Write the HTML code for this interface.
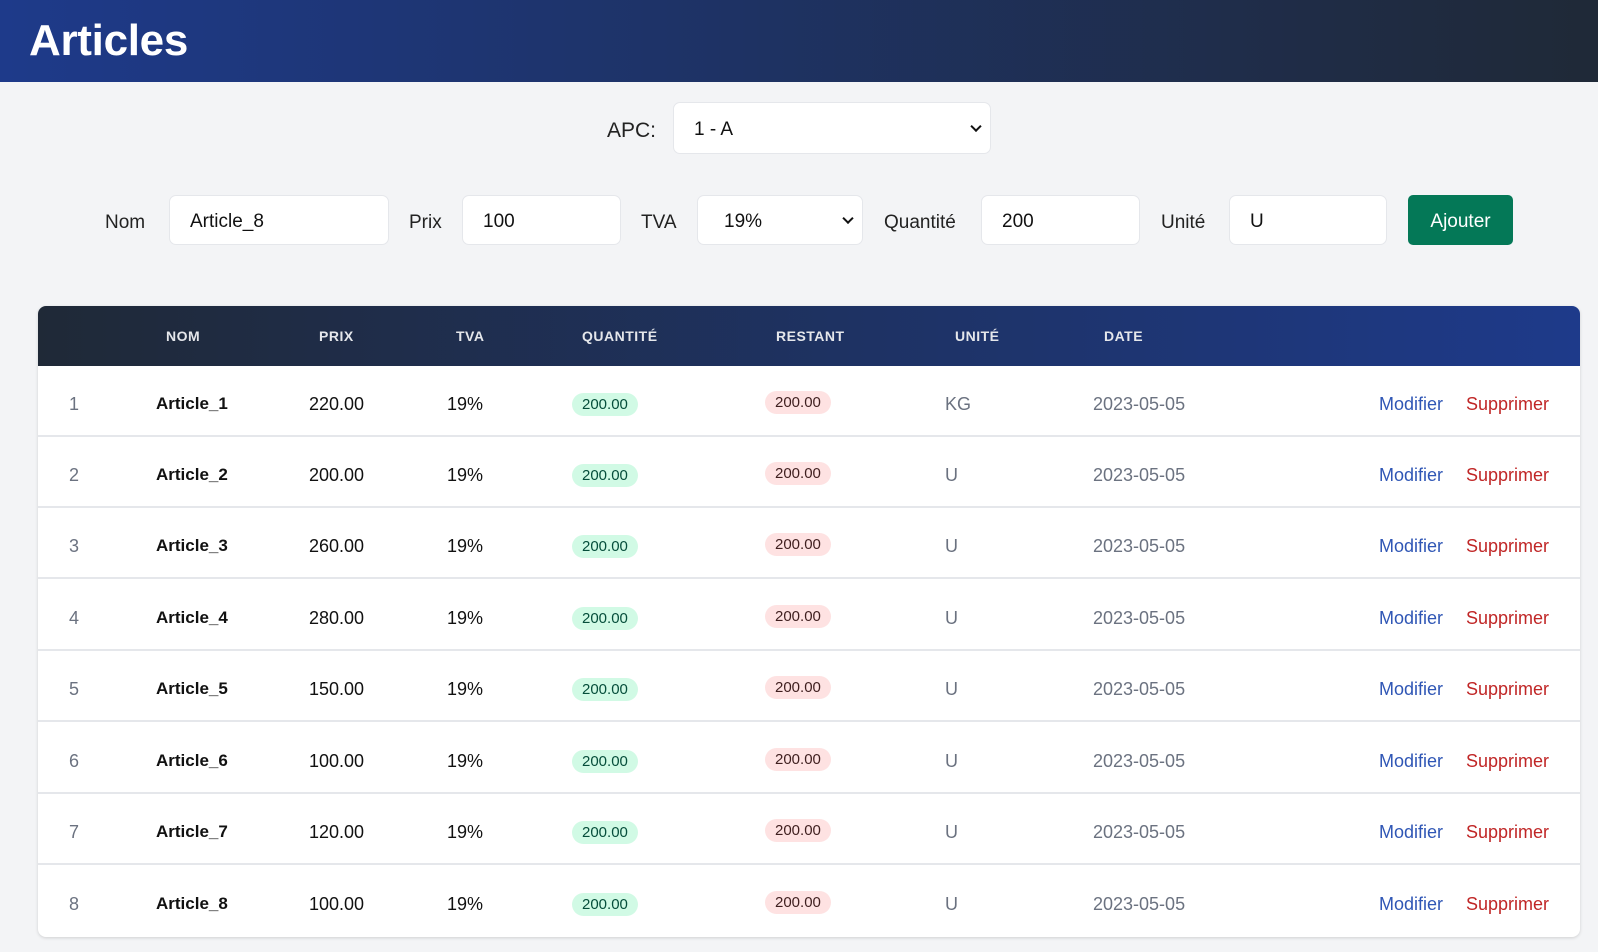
<!DOCTYPE html>
<html><head><meta charset="utf-8"><style>
*{box-sizing:border-box;margin:0;padding:0}
body{width:1598px;height:952px;background:#f3f4f6;font-family:"Liberation Sans",sans-serif;position:relative;overflow:hidden;color:#111}
.hdr{position:absolute;left:0;top:0;width:1598px;height:82px;background:linear-gradient(90deg,#1e3a8a,#1f2937)}
.hdr h1{position:absolute;left:29px;top:16px;color:#fff;font-size:44px;font-weight:bold;letter-spacing:-0.3px}
.a{position:absolute}
.lbl{font-size:19px;color:#222}
.in{position:absolute;background:#fff;border:1px solid #e5e7eb;border-radius:7px;font-size:19px;padding-left:20px;padding-top:4px;display:flex;align-items:center;color:#111}
.chev{position:absolute;right:10px;top:50%;width:8px;height:8px;border-right:2px solid #111;border-bottom:2px solid #111;transform:translateY(-70%) rotate(45deg)}
.btn{position:absolute;left:1408px;top:195px;width:105px;height:50px;background:#047857;border-radius:5px;color:#fff;font-size:19px;display:flex;align-items:center;justify-content:center;padding-top:3px}
.tbl{position:absolute;left:38px;top:306px;width:1542px;height:631px;background:#fff;border-radius:8px;box-shadow:0 1px 3px rgba(0,0,0,.15);overflow:hidden}
.th{position:absolute;left:0;top:0;width:1542px;height:60px;background:linear-gradient(90deg,#1f2937,#1e3a8a);color:#e5e7eb;font-size:14px;font-weight:bold;letter-spacing:.5px}
.th span{position:absolute;top:22px}
.row{position:absolute;left:0;width:1542px;height:71px;border-bottom:2px solid #e5e7eb;font-size:18px}
.row span{position:absolute;top:28px}
.n{color:#6b7280}.nm{font-weight:bold;color:#111;font-size:17px}.g{color:#6b7280}
.bg{top:27px!important;font-size:15px;padding:3px 10px;border-radius:12px}
.green{background:#d1fae5;color:#064e3b}.red{background:#fee2e2;color:#3f1f1f}
.red{top:25px!important}
.mod{color:#2f56b5}.sup{color:#c02626}
</style></head><body>
<div class="hdr"><h1>Articles</h1></div>
<span class="a lbl" style="left:607px;top:119px;font-size:21px">APC:</span>
<div class="in" style="left:673px;top:102px;width:318px;height:52px;font-size:19px">1 - A<i class="chev"></i></div>

<span class="a lbl" style="left:105px;top:212px">Nom</span>
<div class="in" style="left:169px;top:195px;width:220px;height:50px">Article_8</div>
<span class="a lbl" style="left:409px;top:212px">Prix</span>
<div class="in" style="left:462px;top:195px;width:159px;height:50px">100</div>
<span class="a lbl" style="left:641px;top:212px">TVA</span>
<div class="in" style="left:697px;top:195px;width:166px;height:50px;padding-left:26px">19%<i class="chev"></i></div>
<span class="a lbl" style="left:884px;top:212px">Quantité</span>
<div class="in" style="left:981px;top:195px;width:159px;height:50px">200</div>
<span class="a lbl" style="left:1161px;top:212px">Unité</span>
<div class="in" style="left:1229px;top:195px;width:158px;height:50px">U</div>
<div class="btn">Ajouter</div>

<div class="tbl">
<div class="th"><span style="left:128px">NOM</span><span style="left:281px">PRIX</span><span style="left:418px">TVA</span><span style="left:544px">QUANTITÉ</span><span style="left:738px">RESTANT</span><span style="left:917px">UNITÉ</span><span style="left:1066px">DATE</span></div>
<div class="row" style="top:60px"><span class="n" style="left:31px">1</span><span class="nm" style="left:118px">Article_1</span><span style="left:271px">220.00</span><span style="left:409px">19%</span><span class="bg green" style="left:534px">200.00</span><span class="bg red" style="left:727px">200.00</span><span class="g" style="left:907px">KG</span><span class="g" style="left:1055px">2023-05-05</span><span class="mod" style="left:1341px">Modifier</span><span class="sup" style="left:1428px">Supprimer</span></div>
<div class="row" style="top:131px"><span class="n" style="left:31px">2</span><span class="nm" style="left:118px">Article_2</span><span style="left:271px">200.00</span><span style="left:409px">19%</span><span class="bg green" style="left:534px">200.00</span><span class="bg red" style="left:727px">200.00</span><span class="g" style="left:907px">U</span><span class="g" style="left:1055px">2023-05-05</span><span class="mod" style="left:1341px">Modifier</span><span class="sup" style="left:1428px">Supprimer</span></div>
<div class="row" style="top:202px"><span class="n" style="left:31px">3</span><span class="nm" style="left:118px">Article_3</span><span style="left:271px">260.00</span><span style="left:409px">19%</span><span class="bg green" style="left:534px">200.00</span><span class="bg red" style="left:727px">200.00</span><span class="g" style="left:907px">U</span><span class="g" style="left:1055px">2023-05-05</span><span class="mod" style="left:1341px">Modifier</span><span class="sup" style="left:1428px">Supprimer</span></div>
<div class="row" style="top:274px"><span class="n" style="left:31px">4</span><span class="nm" style="left:118px">Article_4</span><span style="left:271px">280.00</span><span style="left:409px">19%</span><span class="bg green" style="left:534px">200.00</span><span class="bg red" style="left:727px">200.00</span><span class="g" style="left:907px">U</span><span class="g" style="left:1055px">2023-05-05</span><span class="mod" style="left:1341px">Modifier</span><span class="sup" style="left:1428px">Supprimer</span></div>
<div class="row" style="top:345px"><span class="n" style="left:31px">5</span><span class="nm" style="left:118px">Article_5</span><span style="left:271px">150.00</span><span style="left:409px">19%</span><span class="bg green" style="left:534px">200.00</span><span class="bg red" style="left:727px">200.00</span><span class="g" style="left:907px">U</span><span class="g" style="left:1055px">2023-05-05</span><span class="mod" style="left:1341px">Modifier</span><span class="sup" style="left:1428px">Supprimer</span></div>
<div class="row" style="top:417px"><span class="n" style="left:31px">6</span><span class="nm" style="left:118px">Article_6</span><span style="left:271px">100.00</span><span style="left:409px">19%</span><span class="bg green" style="left:534px">200.00</span><span class="bg red" style="left:727px">200.00</span><span class="g" style="left:907px">U</span><span class="g" style="left:1055px">2023-05-05</span><span class="mod" style="left:1341px">Modifier</span><span class="sup" style="left:1428px">Supprimer</span></div>
<div class="row" style="top:488px"><span class="n" style="left:31px">7</span><span class="nm" style="left:118px">Article_7</span><span style="left:271px">120.00</span><span style="left:409px">19%</span><span class="bg green" style="left:534px">200.00</span><span class="bg red" style="left:727px">200.00</span><span class="g" style="left:907px">U</span><span class="g" style="left:1055px">2023-05-05</span><span class="mod" style="left:1341px">Modifier</span><span class="sup" style="left:1428px">Supprimer</span></div>
<div class="row" style="top:560px;border-bottom:none"><span class="n" style="left:31px">8</span><span class="nm" style="left:118px">Article_8</span><span style="left:271px">100.00</span><span style="left:409px">19%</span><span class="bg green" style="left:534px">200.00</span><span class="bg red" style="left:727px">200.00</span><span class="g" style="left:907px">U</span><span class="g" style="left:1055px">2023-05-05</span><span class="mod" style="left:1341px">Modifier</span><span class="sup" style="left:1428px">Supprimer</span></div>
</div>
</body></html>
